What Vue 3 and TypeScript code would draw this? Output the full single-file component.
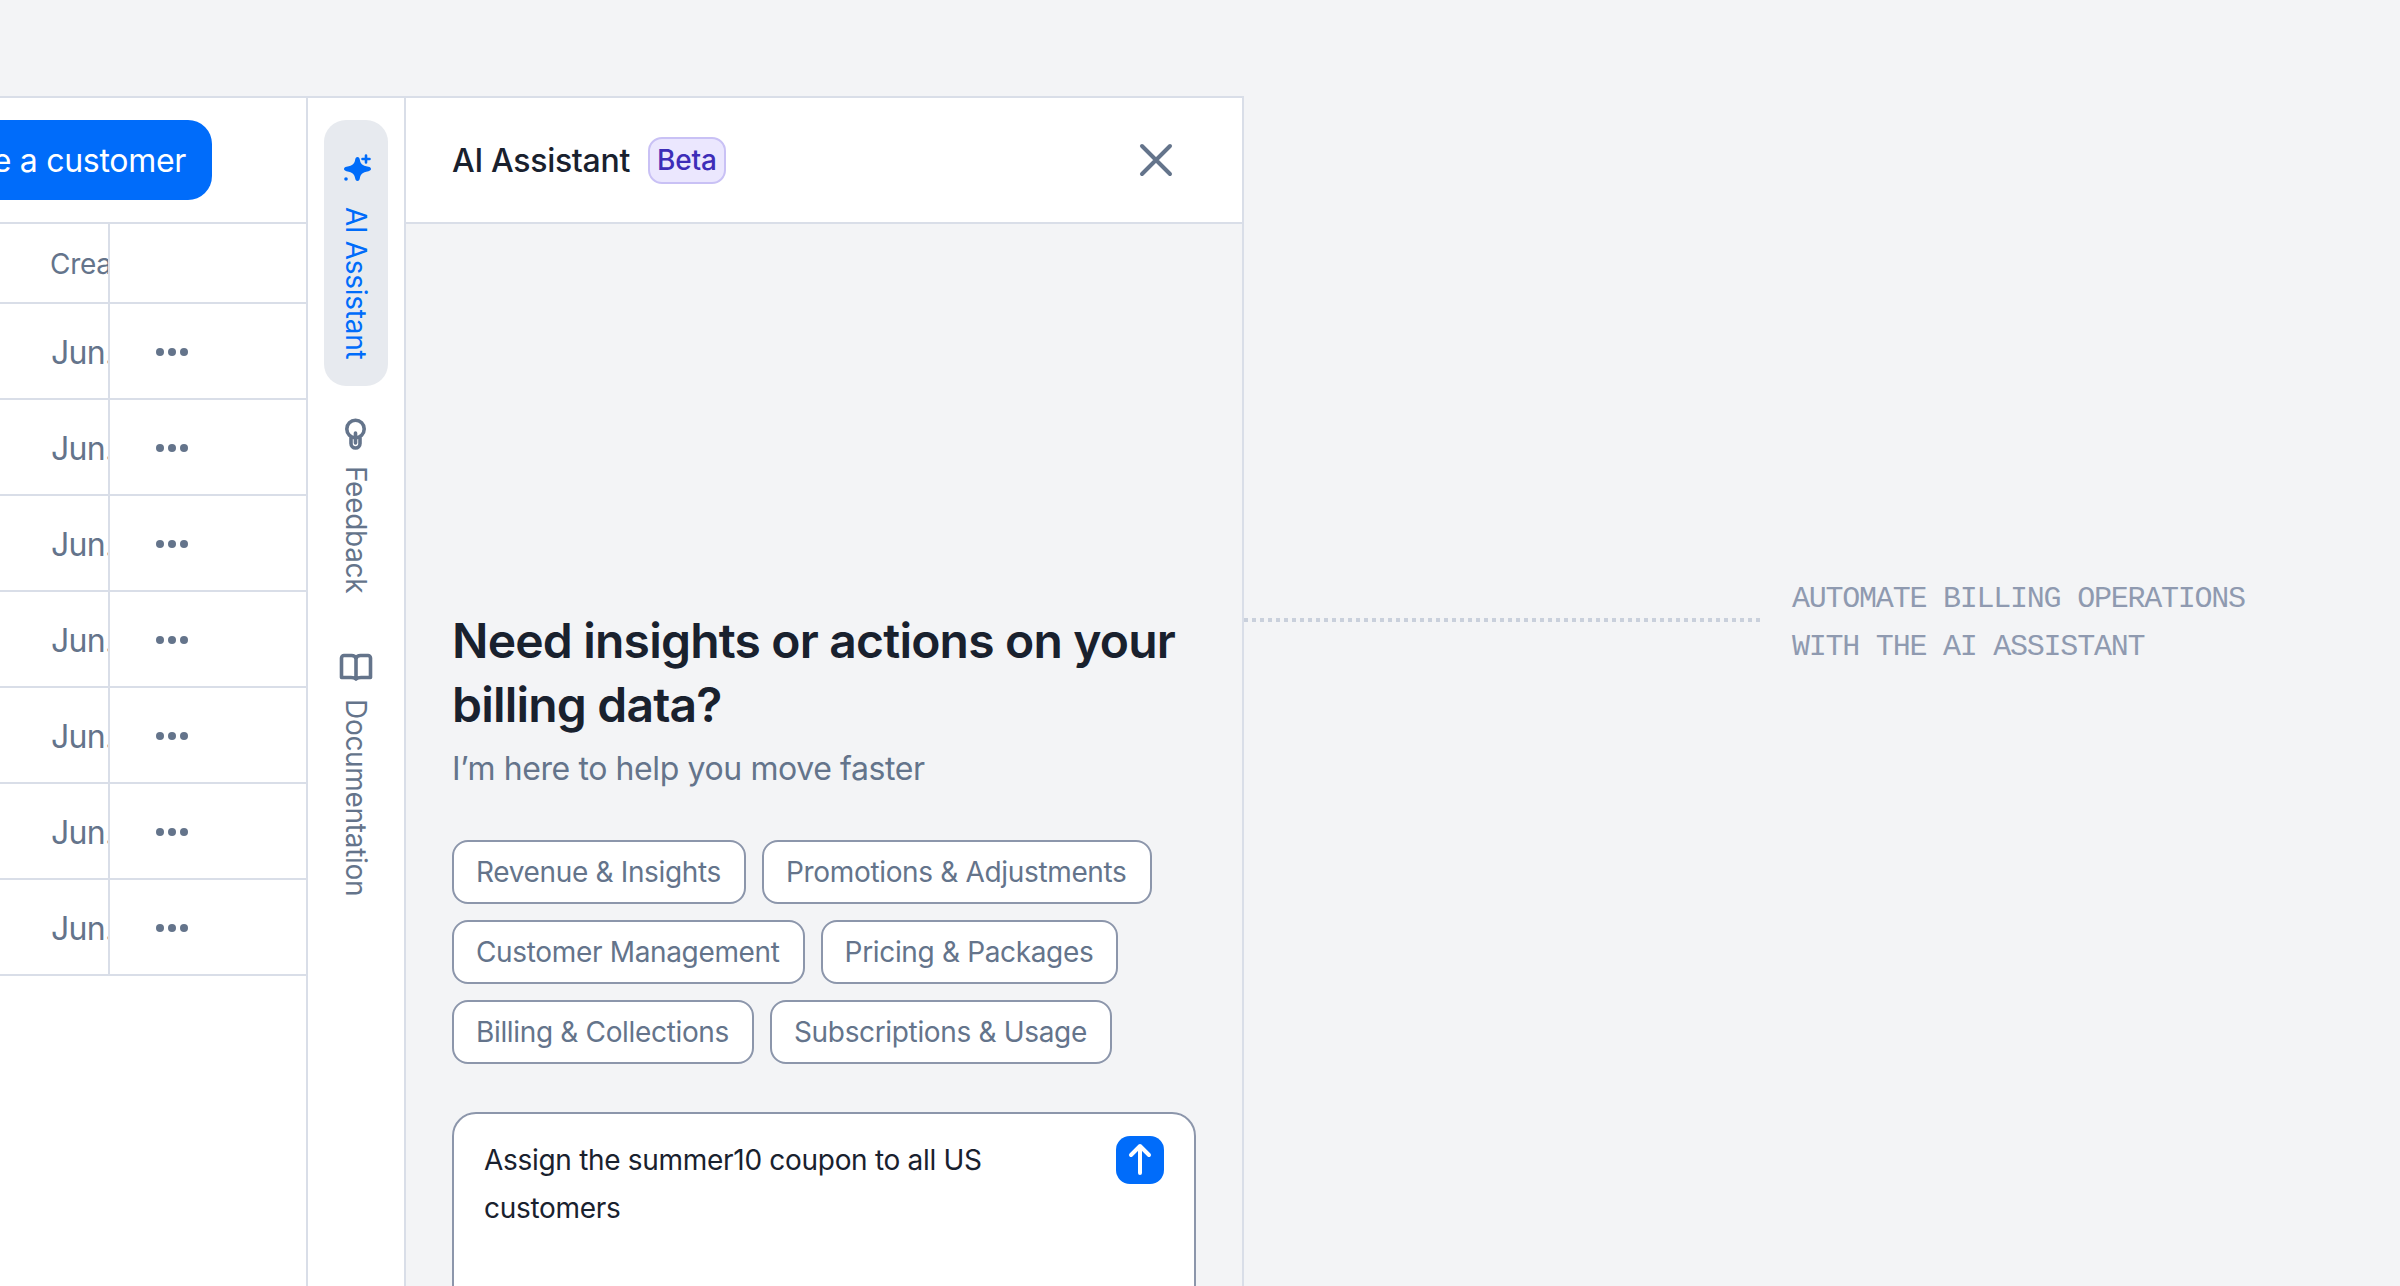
<template>
  <div class="page">
    <div class="frame">
      <section class="customers">
        <div class="customers__head">
          <button class="create-btn">Create a customer</button>
        </div>
        <div class="table">
          <div class="table__row table__row--head">
            <div class="table__cell table__cell--date">Created</div>
            <div class="table__cell"></div>
          </div>
          <div v-for="row in rows" :key="row.id" class="table__row">
            <div class="table__cell table__cell--date table__cell--body">{{ row.created }}</div>
            <div class="table__cell table__cell--more">
              <span class="dot"></span><span class="dot"></span><span class="dot"></span>
            </div>
          </div>
        </div>
      </section>

      <nav class="rail">
        <div class="rail__item rail__item--active">
          <svg class="rail__icon" width="32" height="32" viewBox="0 0 32 32" fill="none">
            <path
              d="M17.5 5C18.9 5 19.5 6 19.8 7.5C20.5 11.7 21.8 13.6 28.5 14.8C30 15.1 31 16 31 17C31 18 30 18.9 28.5 19.2C22 20.4 20.6 22.3 19.8 26.5C19.5 28 18.9 29 17.5 29C16.1 29 15.5 28 15.2 26.5C14.4 22.3 13 20.4 6.5 19.2C5 18.9 4 18 4 17C4 16 5 15.1 6.5 14.8C13 13.6 14.5 11.7 15.2 7.5C15.5 6 16.1 5 17.5 5Z"
              fill="#006CFA"
            />
            <path d="M26 3.5V10.5M22.5 7H29.5" stroke="#006CFA" stroke-width="2.6" stroke-linecap="round" />
            <circle cx="6" cy="27" r="1.8" fill="#006CFA" />
          </svg>
          <span class="rail__label">AI Assistant</span>
        </div>
        <div class="rail__item">
          <svg class="rail__icon" width="32" height="32" viewBox="0 0 32 32" fill="none" stroke="#64748B" stroke-width="3.6" stroke-linecap="round">
            <circle cx="15.5" cy="11" r="8.7" />
            <path d="M11 20V25.5A4.5 4.5 0 0 0 20 25.5V20M15.5 15V25" />
          </svg>
          <span class="rail__label">Feedback</span>
        </div>
        <div class="rail__item">
          <svg class="rail__icon" width="34" height="32" viewBox="0 0 34 32" fill="none" stroke="#64748B" stroke-width="3.6" stroke-linejoin="round" stroke-linecap="round">
            <path d="M17 8C17 6 15 4.5 12.5 4.5H5A2.5 2.5 0 0 0 2.5 7V26.5H12C14.5 26.5 16 27 17 28C18 27 19.5 26.5 22 26.5H31.5V7A2.5 2.5 0 0 0 29 4.5H21.5C19 4.5 17 6 17 8V28" />
          </svg>
          <span class="rail__label">Documentation</span>
        </div>
      </nav>

      <section class="assistant">
        <header class="assistant__head">
          <h2 class="assistant__title">AI Assistant</h2>
          <span class="badge">Beta</span>
          <svg class="assistant__close" width="36" height="36" viewBox="0 0 36 36" fill="none" stroke="#64748B" stroke-width="4" stroke-linecap="round">
            <path d="M4 4L32 32M32 4L4 32" />
          </svg>
        </header>
        <div class="assistant__body">
          <h1 class="assistant__heading">Need insights or actions on your billing data?</h1>
          <p class="assistant__sub">I’m here to help you move faster</p>
          <div class="chips">
            <button v-for="chip in chips" :key="chip" class="chip">{{ chip }}</button>
          </div>
          <div class="prompt">
            <p class="prompt__text">Assign the summer10 coupon to all US customers</p>
            <span class="prompt__send">
              <svg width="48" height="48" viewBox="0 0 48 48" fill="none" stroke="#fff" stroke-width="4" stroke-linecap="round" stroke-linejoin="round">
                <path d="M24 37V10M15 19L24 10L33 19" />
              </svg>
            </span>
          </div>
        </div>
      </section>
    </div>

    <aside class="note">
      <span class="note__line"></span>
      <p class="note__text">AUTOMATE BILLING OPERATIONS<br />WITH THE AI ASSISTANT</p>
    </aside>
  </div>
</template>

<script setup lang="ts">
interface CustomerRow {
  id: number;
  created: string;
}

const rows: CustomerRow[] = Array.from({ length: 7 }, (_, i) => ({
  id: i,
  created: 'Jun. 24, 2025',
}));

const chips: string[] = [
  'Revenue & Insights',
  'Promotions & Adjustments',
  'Customer Management',
  'Pricing & Packages',
  'Billing & Collections',
  'Subscriptions & Usage',
];
</script>

<style>
html,
body {
  margin: 0;
  background: #f3f4f6;
}
</style>

<style scoped>
* {
  box-sizing: border-box;
}

.page {
  display: flex;
  align-items: flex-start;
  width: 2400px;
  height: 1286px;
  padding-top: 96px;
  overflow: hidden;
  background: #f3f4f6;
  font-family: Inter, "Noto Sans", sans-serif;
}

.frame {
  display: flex;
  flex-shrink: 0;
  width: 1244px;
  height: 1190px;
  border-top: 2px solid #d9dee8;
  border-right: 2px solid #d9dee8;
}

.customers {
  width: 308px;
  flex-shrink: 0;
  background: #fff;
  border-right: 2px solid #d9dee8;
  overflow: hidden;
}

.customers__head {
  display: flex;
  justify-content: flex-end;
  align-items: center;
  height: 126px;
  padding-right: 94px;
  border-bottom: 2px solid #d9dee8;
}

.create-btn {
  flex-shrink: 0;
  height: 80px;
  padding: 0 26px;
  border: 0;
  border-radius: 24px;
  background: #006cfa;
  color: #fff;
  font: 400 32px Inter, sans-serif;
  letter-spacing: -0.3px;
  white-space: nowrap;
}

.table__row {
  display: grid;
  grid-template-columns: 110px 196px;
  height: 96px;
  border-bottom: 2px solid #d9dee8;
}

.table__row--head {
  height: 80px;
}

.table__cell {
  display: flex;
  align-items: center;
}

.table__cell--date {
  padding: 1px 0 0 50px;
  border-right: 2px solid #d9dee8;
  overflow: hidden;
  color: #64748b;
  font-size: 28px;
  letter-spacing: -0.3px;
  white-space: nowrap;
}

.table__cell--body {
  padding: 3px 0 0 51px;
  font-size: 32px;
  letter-spacing: -0.7px;
}

.table__cell--more {
  gap: 4px;
  padding: 1px 0 0 46px;
}

.dot {
  width: 8px;
  height: 8px;
  border-radius: 50%;
  background: #64748b;
}

.rail {
  display: flex;
  flex-direction: column;
  flex-shrink: 0;
  width: 98px;
  padding: 22px 16px 0;
  background: #fff;
  border-right: 2px solid #d9dee8;
}

.rail__item {
  display: flex;
  flex-direction: column;
  align-items: center;
  gap: 16px;
  padding: 32px 0 26px;
  color: #64748b;
}

.rail__item--active {
  height: 266px;
  border-radius: 22px;
  background: #e7eaef;
  color: #006cfa;
  gap: 23px;
}

.rail__icon {
  flex-shrink: 0;
}

.rail__label {
  writing-mode: vertical-rl;
  font-size: 28px;
  line-height: 32px;
  letter-spacing: -0.3px;
  white-space: nowrap;
}

.assistant {
  flex: 1;
  min-width: 0;
  overflow: hidden;
}

.assistant__head {
  display: flex;
  align-items: center;
  height: 126px;
  padding: 0 68px 0 46px;
  background: #fff;
  border-bottom: 2px solid #d9dee8;
}

.assistant__title {
  margin: 0;
  color: #19212e;
  font-size: 32px;
  font-weight: 500;
  letter-spacing: -0.3px;
}

.badge {
  display: flex;
  align-items: center;
  height: 47px;
  margin-left: 18px;
  padding: 0 7px;
  border: 2px solid #c9c1f5;
  border-radius: 14px;
  background: #ebe7fe;
  color: #3d2db8;
  font-size: 28px;
  font-weight: 500;
  letter-spacing: -0.2px;
}

.assistant__close {
  margin-left: auto;
}

.assistant__body {
  padding: 385px 46px 0;
}

.assistant__heading {
  margin: 0;
  color: #19212e;
  font-size: 48px;
  font-weight: 600;
  line-height: 64px;
  letter-spacing: -0.8px;
}

.assistant__sub {
  margin: 8px 0 0;
  color: #64748b;
  font-size: 32px;
  line-height: 48px;
  letter-spacing: -0.4px;
}

.chips {
  display: flex;
  flex-wrap: wrap;
  gap: 16px;
  margin-top: 47px;
}

.chip {
  height: 64px;
  padding: 0 23px 0 22px;
  border: 2px solid #8c96ab;
  border-radius: 16px;
  background: #fff;
  color: #64748b;
  font: 400 28px Inter, sans-serif;
  letter-spacing: -0.34px;
}

.prompt {
  display: flex;
  justify-content: space-between;
  align-items: flex-start;
  height: 300px;
  margin-top: 48px;
  padding: 22px 30px 0 30px;
  border: 2px solid #8c96ab;
  border-radius: 24px;
  background: #fff;
}

.prompt__text {
  width: 560px;
  margin: 0;
  color: #19212e;
  font-size: 28px;
  line-height: 48px;
  letter-spacing: -0.3px;
}

.prompt__send {
  display: flex;
  width: 48px;
  height: 48px;
  border-radius: 14px;
  background: #006cfa;
}

.note {
  display: flex;
  flex-shrink: 0;
  align-items: center;
  gap: 32px;
  margin-top: 473px;
}

.note__line {
  width: 516px;
  height: 4px;
  background: repeating-linear-gradient(90deg, #c9d0dc 0 4px, transparent 4px 8px);
}

.note__text {
  margin: 0;
  padding-top: 6px;
  color: #8f9ab0;
  font-family: "Liberation Mono", monospace;
  font-size: 30px;
  line-height: 48px;
  letter-spacing: -1.23px;
}
</style>
